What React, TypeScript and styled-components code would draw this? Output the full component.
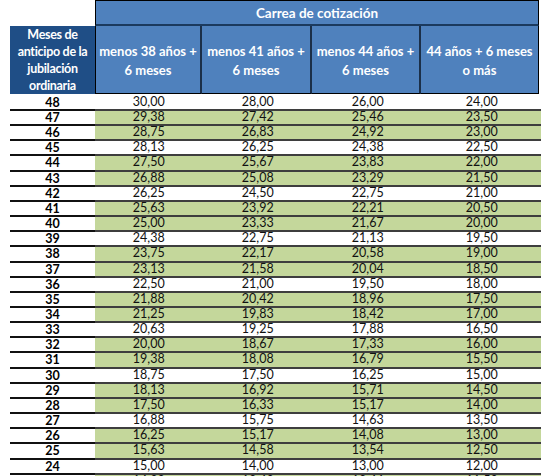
import styled, { createGlobalStyle } from "styled-components";

const GlobalStyle = createGlobalStyle`
  * { box-sizing: border-box; }
  body {
    margin: 0;
    background: #ffffff;
    font-family: Lato, "Liberation Sans", sans-serif;
    color: #000;
  }
`;

const COLS = [107, 110, 109, 118];
const ROW_H = 15.16;

const Sheet = styled.div`
  width: 540px;
  padding-left: 10px;
`;

const TitleRow = styled.div`
  display: flex;
`;

const Corner = styled.div`
  width: 85px;
`;

const Title = styled.div`
  width: ${COLS.reduce((a, b) => a + b, 0)}px;
  height: 26px;
  background: #4f81bd;
  border: 1px solid #000;
  border-bottom: 2px solid #1b3a5e;
  color: #fff;
  font-weight: 700;
  font-size: 13.5px;
  display: flex;
  align-items: center;
  justify-content: center;
`;

const HeadRow = styled.div`
  display: flex;
  height: 68px;
`;

const Label = styled.div`
  width: 85px;
  background: #1f4e86;
  color: #fff;
  font-weight: 700;
  font-size: 12.5px;
  line-height: 17px;
  text-align: center;
  display: flex;
  align-items: center;
  justify-content: center;
  white-space: nowrap;
  letter-spacing: -0.3px;
`;

const ColHead = styled.div<{ $w: number; $first?: boolean }>`
  width: ${(p) => p.$w}px;
  background: #4f81bd;
  color: #fff;
  font-weight: 700;
  font-size: 13px;
  line-height: 19px;
  text-align: center;
  white-space: nowrap;
  display: flex;
  align-items: center;
  justify-content: center;
  padding-top: 3px;
  border-bottom: 1px solid #000;
  border-right: 2px solid #1b2f48;
  border-left: ${(p) => (p.$first ? "1px solid #000" : "none")};
  &:last-child {
    border-right: 1px solid #000;
  }
`;

const Body = styled.div`
  padding-top: 1.5px;
  width: 531px;
`;

const DataRow = styled.div`
  display: flex;
  height: ${ROW_H}px;
  &:first-child {
    height: ${ROW_H + 0.3}px;
  }
`;

const Months = styled.div`
  width: 85px;
  background: #fff;
  border-bottom: 2px solid #111;
  font-weight: 700;
  font-size: 12.5px;
  line-height: ${ROW_H - 3.5}px;
  padding-top: 1px;
  text-align: center;
`;

const Value = styled.div<{ $w: number; $green: boolean }>`
  flex: ${(p) => p.$w} 0 ${(p) => p.$w}px;
  background: ${(p) => (p.$green ? "#c4d79b" : "#ffffff")};
  border-bottom: 2px solid #3e3e3e;
  font-size: 12.5px;
  line-height: ${ROW_H - 4}px;
  text-align: center;
  color: #111;
`;

const factors = [0.625, 7 / 12, 13 / 24, 0.5];
const months = Array.from({ length: 26 }, (_, i) => 48 - i);

const fmt = (v: number) => v.toFixed(2).replace(".", ",");

const App = () => (
  <>
    <GlobalStyle />
    <Sheet>
      <TitleRow>
        <Corner />
        <Title>Carrea de cotización</Title>
      </TitleRow>
      <HeadRow>
        <Label>
          Meses de
          <br />
          anticipo de la
          <br />
          jubilación
          <br />
          ordinaria
        </Label>
        <ColHead $w={COLS[0]} $first>
          menos 38 años +
          <br />6 meses
        </ColHead>
        <ColHead $w={COLS[1]}>
          menos 41 años +
          <br />6 meses
        </ColHead>
        <ColHead $w={COLS[2]}>
          menos 44 años +
          <br />6 meses
        </ColHead>
        <ColHead $w={COLS[3]}>
          44 años + 6 meses
          <br />o más
        </ColHead>
      </HeadRow>
      <Body>
        {months.map((m, i) => (
          <DataRow key={m}>
            <Months>{m}</Months>
            {factors.map((f, c) => (
              <Value key={c} $w={COLS[c]} $green={i % 3 !== 0}>
                {fmt(Math.round(m * f * 100 + 1e-9) / 100)}
              </Value>
            ))}
          </DataRow>
        ))}
      </Body>
    </Sheet>
  </>
);

export default App;
